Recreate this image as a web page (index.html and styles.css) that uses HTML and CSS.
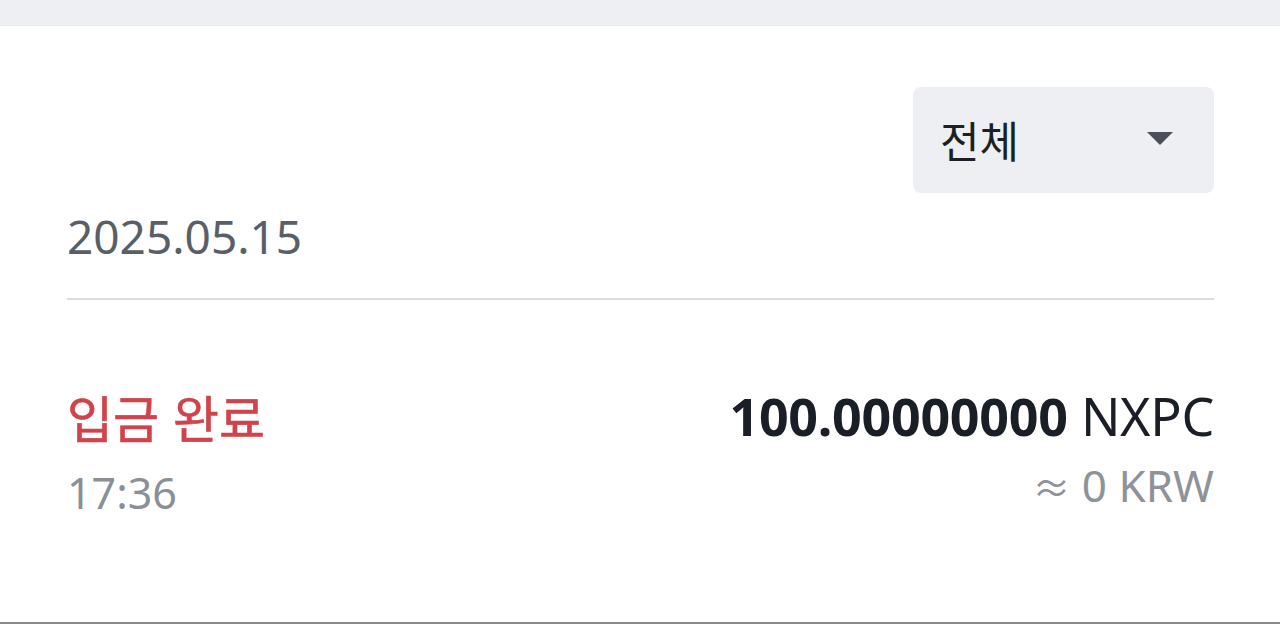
FILE: index.html
```html
<!DOCTYPE html>
<html lang="ko">
<head>
<meta charset="utf-8">
<link rel="stylesheet" href="styles.css">
</head>
<body>
<div class="topband"></div>
<main class="content">
  <div class="filter-row">
    <div class="select">
      <span class="select-label">전체</span>
      <svg class="caret" width="26" height="14" viewBox="0 0 26 14"><path d="M0 0 H26 L13 13 Z" fill="#4a4f57"/></svg>
    </div>
  </div>
  <div class="date">2025.05.15</div>
  <div class="divider"></div>
  <div class="tx">
    <div class="tx-left">
      <div class="status">입금 완료</div>
      <div class="time">17:36</div>
    </div>
    <div class="tx-right">
      <div class="amount"><span class="num">100.00000000</span> <span class="unit">NXPC</span></div>
      <div class="krw"><span class="approx">≈</span> 0 KRW</div>
    </div>
  </div>
</main>
<div class="bottom-line"></div>
</body>
</html>
```
FILE: styles.css
```css
html, body {
  margin: 0;
  padding: 0;
  background: #ffffff;
  width: 1280px;
  height: 624px;
  overflow: hidden;
}
body {
  font-family: "Noto Sans", "Noto Sans CJK KR", sans-serif;
  display: flex;
  flex-direction: column;
}
.topband {
  height: 25px;
  background: #eeeff3;
  border-bottom: 1px solid #e6e7eb;
  flex: none;
}
.content {
  flex: 1;
  padding: 0 66px 0 67px;
  display: flex;
  flex-direction: column;
}
.filter-row {
  display: flex;
  justify-content: flex-end;
  margin-top: 61px;
}
.select {
  width: 301px;
  height: 106px;
  box-sizing: border-box;
  background: #eeeff3;
  border-radius: 8px;
  display: flex;
  align-items: center;
  justify-content: space-between;
  padding: 0 41px 0 27px;
}
.select-label {
  font-family: "Noto Sans CJK KR", sans-serif;
  font-size: 43px;
  font-weight: 400;
  color: #1b1f26;
  line-height: 1;
  margin-top: -2px;
}
.caret { display: block; margin-top: -2px; }
.date {
  font-size: 46px;
  line-height: 60px;
  color: #5a5f67;
  margin-top: 13px;
}
.divider {
  height: 2px;
  background: #dcdde0;
  margin-top: 32px;
}
.tx {
  display: flex;
  justify-content: space-between;
  margin-top: 86px;
}
.tx-left, .tx-right { display: flex; flex-direction: column; }
.tx-right { align-items: flex-end; }
.status {
  font-family: "Noto Sans CJK KR", sans-serif;
  font-size: 50px;
  font-weight: 400;
  line-height: 60px;
  color: #d0434b;
  -webkit-text-stroke: 0.6px #d0434b;
}
.time {
  font-size: 43px;
  line-height: 56px;
  color: #8b8f96;
  margin-top: 19px;
}
.amount {
  font-size: 52px;
  line-height: 60px;
  color: #1a1e26;
  letter-spacing: -0.3px;
}
.amount .num { font-weight: 700; }
.krw {
  font-size: 44px;
  line-height: 56px;
  color: #8f9297;
  margin-top: 11px;
}
.krw .approx { font-size: 38px; }
.bottom-line {
  height: 2px;
  background: #8a8a8a;
  flex: none;
}
```
